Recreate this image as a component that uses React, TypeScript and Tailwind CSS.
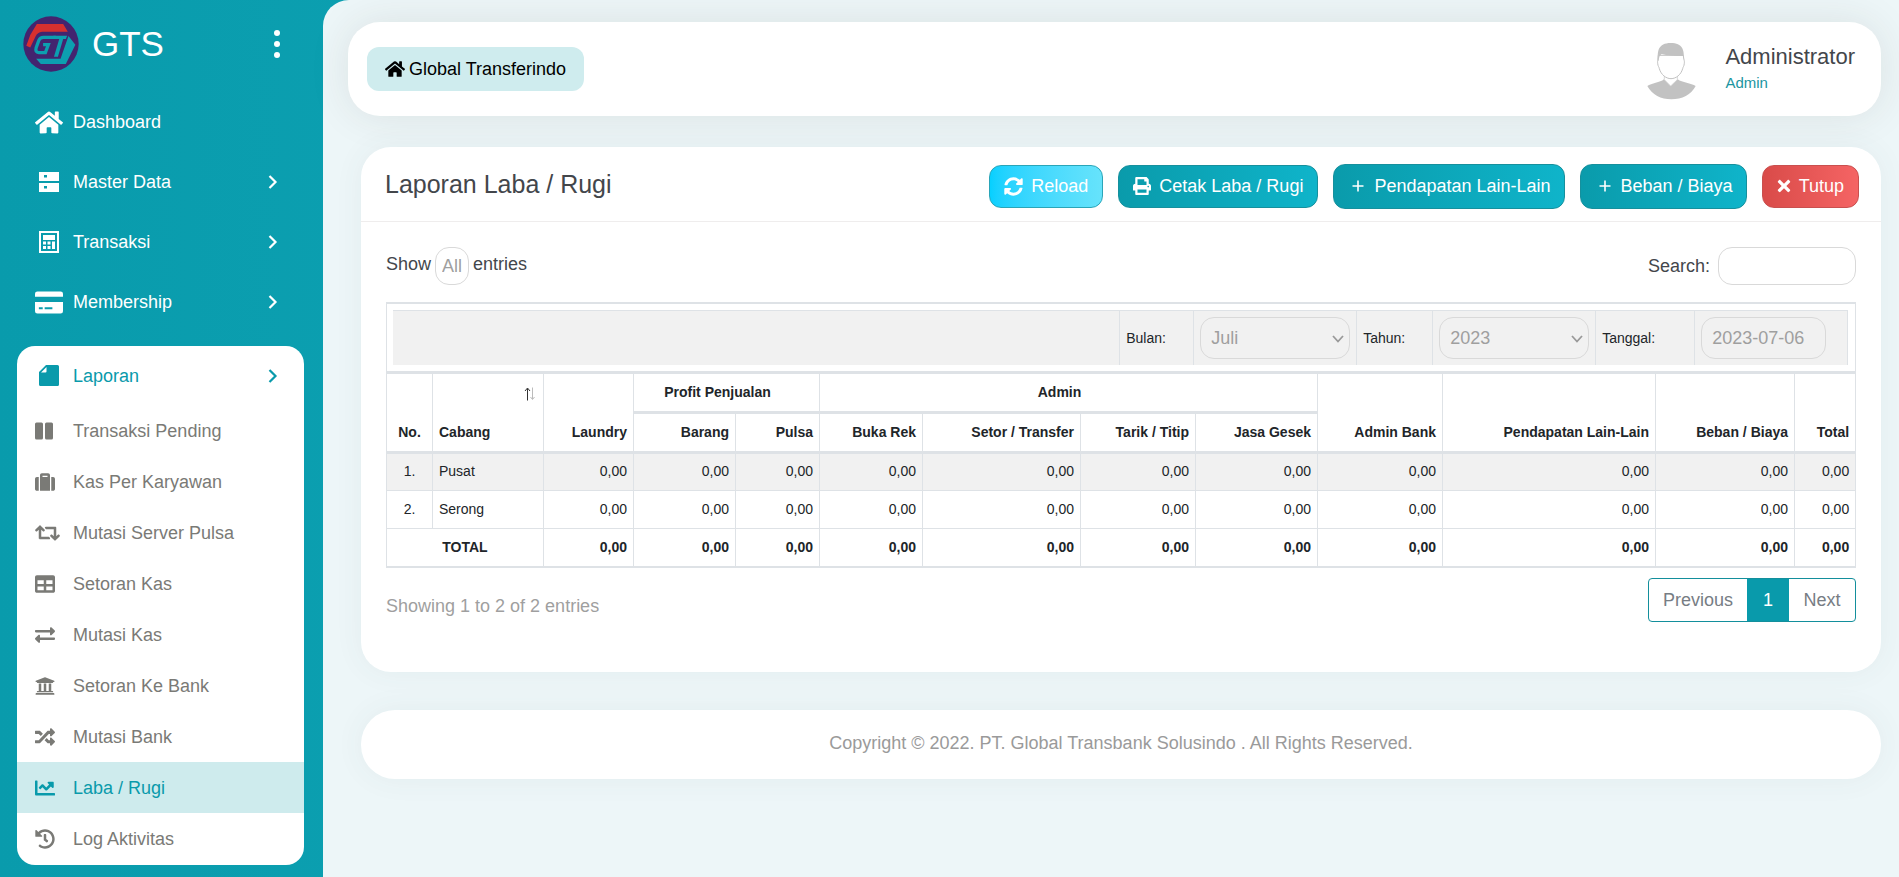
import React from "react";
import {
  FaHome,
  FaSuitcase,
  FaRetweet,
  FaTable,
  FaExchangeAlt,
  FaUniversity,
  FaRandom,
  FaChartLine,
  FaHistory,
  FaSyncAlt,
  FaPrint,
  FaTimes,
} from "react-icons/fa";

const FONT = "font-['Liberation_Sans',Arial,sans-serif]";

function Logo() {
  return (
    <svg viewBox="38 32 170 170" className="size-14 shrink-0" aria-hidden="true">
      <circle cx="123" cy="117" r="84" fill="#43246f" />
      <path d="M80 56H160L174 80H96Q82 82 76 94L60 128L48 122L60 90Z" fill="#d6302f" />
      <path
        d="M138 97H100Q90 97 86 106L78 128Q74 143 86 143H106L115 119H99"
        fill="none"
        stroke="#0c9fb0"
        strokeWidth="10"
      />
      <path d="M130 92H172L168 102H160L144 156H132L148 102H127Z" fill="#0c9fb0" />
      <path d="M176 93L197 119L168 178H92L78 162H152Z" fill="#0c9fb0" />
    </svg>
  );
}

function Avatar() {
  return (
    <svg viewBox="50 38 153 174" className="h-[58px] w-[51px] shrink-0" role="img" aria-label="Administrator">
      <path d="M54 170C66 162 92 160 104 150L124 171L145 150C158 160 186 162 199 170C186 196 158 210 126 210C95 210 68 196 54 170Z" fill="#c2c2c2" />
      <path d="M105 138V151L124 170L144 151V138" fill="#fff" stroke="#c2c2c2" strokeWidth="2" />
      <path d="M87 78C86 92 84 92 85 102C86 112 89 112 90 118C95 136 110 148 125 148C140 148 155 136 160 118C161 112 164 112 165 102C166 92 163 92 162 78Z" fill="#fff" stroke="#c2c2c2" strokeWidth="3" />
      <path d="M86 94C84 66 86 41 124 41C160 41 166 62 163 94L161 80Q120 80 97 74Q89 78 88 94Z" fill="#c2c2c2" />
    </svg>
  );
}

const ServerIcon = () => (
  <svg viewBox="0 0 20 20" className="size-5" fill="currentColor" aria-hidden="true">
    <path fillRule="evenodd" d="M0 0H20V9H0ZM5 3V5.500H8V3Z" />
    <path fillRule="evenodd" d="M0 11H20V20H0ZM5 14V16.500H8V14Z" />
  </svg>
);

const CalculatorIcon = () => (
  <svg viewBox="0 0 20 22" className="h-[22px] w-5" fill="currentColor" aria-hidden="true">
    <path fillRule="evenodd" d="M0 0H20V22H0ZM2 2V20H18V2Z" />
    <path d="M4 4H16V9H4ZM4 10.500H7V13.500H4ZM8.500 10.500H11.500V13.500H8.500ZM13 10.500H16V18H13ZM4 15H7V18H4ZM8.500 15H11.500V18H8.500Z" />
  </svg>
);

const CardIcon = () => (
  <svg viewBox="0 0 29 23" className="h-[23px] w-[29px]" fill="currentColor" aria-hidden="true">
    <path d="M2.500 0H26.500A2.500 2.500 0 0 1 29 2.500V5.500H0V2.500A2.500 2.500 0 0 1 2.500 0Z" />
    <path fillRule="evenodd" d="M0 11H29V20.500A2.500 2.500 0 0 1 26.500 23H2.500A2.500 2.500 0 0 1 0 20.500ZM4 16.500V18.500H8V16.500ZM10 16.500V18.500H18V16.500Z" />
  </svg>
);

const FileIcon = () => (
  <svg viewBox="0 0 20 21" className="h-[21px] w-5" fill="currentColor" aria-hidden="true">
    <path fillRule="evenodd" d="M7 0H18.500A1.500 1.500 0 0 1 20 1.500V19.500A1.500 1.500 0 0 1 18.500 21H1.500A1.500 1.500 0 0 1 0 19.500V7ZM7.500 2L2 7.500H6.500A1 1 0 0 0 7.500 6.500Z" />
  </svg>
);

const ColumnsIcon = () => (
  <svg viewBox="0 0 20 20" className="size-5" fill="currentColor" aria-hidden="true">
    <rect x="0" y="1.500" width="8" height="17" rx="1.500" />
    <rect x="10" y="1.500" width="8" height="17" rx="1.500" />
  </svg>
);

const Chevron = () => (
  <svg viewBox="0 0 10 14" className="h-[14px] w-[10px]" fill="none" stroke="currentColor" strokeWidth="2.200" aria-hidden="true">
    <path d="M1.500 1L7.500 7L1.500 13" />
  </svg>
);

const PlusIcon = () => (
  <svg viewBox="0 0 12 12" className="size-3" fill="none" stroke="currentColor" strokeWidth="1.600" aria-hidden="true">
    <path d="M6 0.500V11.500M0.500 6H11.500" />
  </svg>
);

const SelectArrow = () => (
  <svg viewBox="0 0 12 8" className="pointer-events-none absolute top-[18px] right-[6px] h-2 w-3" fill="none" stroke="#999" strokeWidth="1.800" aria-hidden="true">
    <path d="M1 1L6 6.500L11 1" />
  </svg>
);

const SortIcon = () => (
  <svg viewBox="0 0 12 14" className="absolute top-[13px] right-[7px] h-[14px] w-3" fill="none" aria-hidden="true">
    <path d="M3.500 13.500V1.500M1 4L3.500 1L6 4" stroke="#333" />
    <path d="M8.500 0.500V12M6.500 10L8.500 12.500L10.500 10" stroke="#bbb" />
  </svg>
);

const mainItems = [
  { label: "Dashboard", icon: <FaHome className="h-[25px] w-[28px]" />, arrow: false },
  { label: "Master Data", icon: <ServerIcon />, arrow: true },
  { label: "Transaksi", icon: <CalculatorIcon />, arrow: true },
  { label: "Membership", icon: <CardIcon />, arrow: true },
];

const subItems = [
  { label: "Transaksi Pending", icon: <ColumnsIcon /> },
  { label: "Kas Per Karyawan", icon: <FaSuitcase className="size-5" /> },
  { label: "Mutasi Server Pulsa", icon: <FaRetweet className="h-5 w-[25px]" /> },
  { label: "Setoran Kas", icon: <FaTable className="size-5" /> },
  { label: "Mutasi Kas", icon: <FaExchangeAlt className="size-5" /> },
  { label: "Setoran Ke Bank", icon: <FaUniversity className="size-5" /> },
  { label: "Mutasi Bank", icon: <FaRandom className="size-5" /> },
  { label: "Laba / Rugi", icon: <FaChartLine className="size-5" />, active: true },
  { label: "Log Aktivitas", icon: <FaHistory className="size-5" /> },
];

function Sidebar() {
  return (
    <aside className="w-[323px] shrink-0 pb-3 text-lg text-white">
      <div className="flex h-[92px] items-center pr-10 pb-1 pl-[23px]">
        <Logo />
        <span className="ml-[13px] flex-1 text-[35px] leading-10">GTS</span>
        <button type="button" aria-label="Menu" className="flex w-3 flex-col items-center gap-[5px]">
          <span className="size-[6px] rounded-full bg-white" />
          <span className="size-[6px] rounded-full bg-white" />
          <span className="size-[6px] rounded-full bg-white" />
        </button>
      </div>
      <nav>
        {mainItems.map((item) => (
          <a key={item.label} href="#" className="flex h-[60px] items-center pr-[45px] pl-[35px]">
            <span className="flex w-7 shrink-0 justify-center">{item.icon}</span>
            <span className="ml-[10px] flex-1">{item.label}</span>
            {item.arrow && <Chevron />}
          </a>
        ))}
        <div className="mt-[14px] mr-[19px] ml-[17px] overflow-hidden rounded-[18px] bg-white pb-px">
          <a href="#" className="flex h-[59px] items-center pr-[26px] pl-[18px] text-[#099aab]">
            <span className="flex w-7 shrink-0 justify-center">
              <FileIcon />
            </span>
            <span className="ml-[10px] flex-1">Laporan</span>
            <Chevron />
          </a>
          {subItems.map((item) => (
            <a
              key={item.label}
              href="#"
              className={
                item.active
                  ? "flex h-[51px] items-center bg-[#ceebed] pl-[18px] text-[#099aab]"
                  : "flex h-[51px] items-center pl-[18px] text-[#7a7a76]"
              }
            >
              <span className="w-7 shrink-0">{item.icon}</span>
              <span className="ml-[10px]">{item.label}</span>
            </a>
          ))}
        </div>
      </nav>
    </aside>
  );
}

const colWidths = [
  "w-[46px]", "w-[111px]", "w-[90px]", "w-[102px]", "w-[84px]", "w-[103px]", "w-[158px]",
  "w-[115px]", "w-[122px]", "w-[125px]", "w-[213px]", "w-[139px]", "w-[61px]",
];

const rows = [
  { no: "1.", name: "Pusat", values: Array(11).fill("0,00") },
  { no: "2.", name: "Serong", values: Array(11).fill("0,00") },
];
const totals = Array(11).fill("0,00");

const cell = "border border-[#dee2e6] px-[6px]";
const head = "border border-b-[3px] border-[#dee2e6] px-[6px] pb-[9px] align-bottom font-bold whitespace-nowrap";

function Filters() {
  const label = "flex items-center border-l border-[#dee2e6] pl-[6px]";
  const control = "h-[42px] appearance-none rounded-[14px] border border-[#d9d9d9] bg-transparent pl-[10px] text-lg text-[#9f9f9f]";
  return (
    <div className="flex h-[55px] border-t border-r border-[#dee2e6] bg-[#f1f1f1] font-normal">
      <div className="flex-1" />
      <label htmlFor="bulan" className={label + " w-[74px]"}>Bulan:</label>
      <div className="w-[163px] border-l border-[#dee2e6] p-[6px]">
        <div className="relative w-[150px]">
          <select id="bulan" className={control + " w-full"} defaultValue="Juli">
            <option>Juni</option>
            <option>Juli</option>
          </select>
          <SelectArrow />
        </div>
      </div>
      <label htmlFor="tahun" className={label + " w-[76px]"}>Tahun:</label>
      <div className="w-[163px] border-l border-[#dee2e6] p-[6px]">
        <div className="relative w-[150px]">
          <select id="tahun" className={control + " w-full"} defaultValue="2023">
            <option>2022</option>
            <option>2023</option>
          </select>
          <SelectArrow />
        </div>
      </div>
      <label htmlFor="tanggal" className={label + " w-[99px]"}>Tanggal:</label>
      <div className="w-[153px] border-l border-[#dee2e6] p-[6px]">
        <input id="tanggal" type="text" defaultValue="2023-07-06" className={control + " w-[125px]"} />
      </div>
    </div>
  );
}

function ReportTable() {
  return (
    <table className="w-full table-fixed border-collapse border-y-2 border-[#dee2e6] text-sm text-[#212529]">
      <colgroup>
        {colWidths.map((w, i) => (
          <col key={i} className={w} />
        ))}
      </colgroup>
      <thead>
        <tr>
          <td colSpan={13} className="border border-t-2 border-b-[3px] border-[#dee2e6] py-[6px] pr-[7px] pl-[6px]">
            <Filters />
          </td>
        </tr>
        <tr className="h-10">
          <th rowSpan={2} className={head + " text-center"}>No.</th>
          <th rowSpan={2} className={head + " relative text-left"}>
            Cabang
            <SortIcon />
          </th>
          <th rowSpan={2} className={head + " text-right"}>Laundry</th>
          <th colSpan={2} className={head + " pr-6 text-center"}>Profit Penjualan</th>
          <th colSpan={4} className={head + " pr-6 text-center"}>Admin</th>
          <th rowSpan={2} className={head + " text-right"}>Admin Bank</th>
          <th rowSpan={2} className={head + " text-right"}>Pendapatan Lain-Lain</th>
          <th rowSpan={2} className={head + " text-right"}>Beban / Biaya</th>
          <th rowSpan={2} className={head + " text-right"}>Total</th>
        </tr>
        <tr className="h-10">
          <th className={head + " text-right"}>Barang</th>
          <th className={head + " text-right"}>Pulsa</th>
          <th className={head + " text-right"}>Buka Rek</th>
          <th className={head + " text-right"}>Setor / Transfer</th>
          <th className={head + " text-right"}>Tarik / Titip</th>
          <th className={head + " text-right"}>Jasa Gesek</th>
        </tr>
      </thead>
      <tbody>
        {rows.map((row) => (
          <tr key={row.no} className="h-[38px] odd:bg-[#f1f1f1]">
            <td className={cell + " pb-[2px] text-center"}>{row.no}</td>
            <td className={cell + " pb-[2px]"}>{row.name}</td>
            {row.values.map((v, i) => (
              <td key={i} className={cell + " pb-[2px] text-right"}>{v}</td>
            ))}
          </tr>
        ))}
      </tbody>
      <tfoot>
        <tr className="h-[38px]">
          <th colSpan={2} className={cell + " border-b-2 text-center"}>TOTAL</th>
          {totals.map((v, i) => (
            <th key={i} className={cell + " border-b-2 text-right"}>{v}</th>
          ))}
        </tr>
      </tfoot>
    </table>
  );
}

const btn = "flex items-center justify-center rounded-xl border text-lg leading-7 text-white whitespace-nowrap";
const teal = btn + " border-[#16909d] bg-linear-to-r from-[#0a9bab] to-[#0fb4ca]";

export default function App() {
  return (
    <div className={"flex min-h-screen bg-linear-to-r from-[#099bac] from-0% to-[#0ca0b1] to-25% " + FONT}>
      <Sidebar />
      <div className="min-w-0 flex-1 rounded-tl-[26px] bg-[#edf6f8] pt-[22px] pr-[18px] pb-6 pl-[25px]">
        <header className="flex h-[94px] items-center justify-between rounded-[32px] bg-white pr-[26px] pl-[19px] shadow-[0_0_40px_rgba(60,50,40,0.10)]">
          <a href="#" className="flex h-11 items-center gap-1 rounded-xl bg-[#cfecee] px-[18px] text-lg text-black">
            <FaHome className="h-[18px] w-5" />
            Global Transferindo
          </a>
          <div className="flex items-center pt-1">
            <Avatar />
            <div className="ml-7 pb-1">
              <div className="text-[22px] leading-7 text-[#43464b]">Administrator</div>
              <div className="text-[15px] leading-6 text-[#1b959f]">Admin</div>
            </div>
          </div>
        </header>

        <main className="mt-[31px] ml-[13px] rounded-[30px] bg-white pb-[50px] shadow-[0_0_30px_rgba(60,80,90,0.06)]">
          <div className="flex h-[75px] items-center justify-between border-b border-[#efeded] pr-[22px] pl-6">
            <h1 className="text-[25px] leading-8 text-[#43464b]">Laporan Laba / Rugi</h1>
            <div className="flex items-center gap-[15px] pt-1">
              <button type="button" className={btn + " h-[43px] gap-2 border-[#2aa5b8] bg-linear-to-r from-[#05d0ff] to-[#66e3fb] px-[14px]"}>
                <FaSyncAlt className="size-[19px]" />
                Reload
              </button>
              <button type="button" className={teal + " h-[43px] gap-2 px-[14px]"}>
                <FaPrint className="size-[18px]" />
                Cetak Laba / Rugi
              </button>
              <button type="button" className={teal + " h-[45px] gap-[10px] pr-[13px] pl-[18px]"}>
                <PlusIcon />
                Pendapatan Lain-Lain
              </button>
              <button type="button" className={teal + " h-[45px] gap-[10px] pr-[13px] pl-[18px]"}>
                <PlusIcon />
                Beban / Biaya
              </button>
              <button type="button" className={btn + " h-[43px] gap-2 border-[#c9504f] bg-linear-to-r from-[#d94b49] to-[#f56464] px-[14px]"}>
                <FaTimes className="h-[18px] w-[14px]" />
                Tutup
              </button>
            </div>
          </div>

          <div className="px-[25px] pt-[25px]">
            <div className="flex items-center justify-between text-lg text-[#43464b]">
              <label className="flex items-center gap-1">
                <span className="pb-1">Show</span>
                <select className="h-[38px] w-[34px] appearance-none rounded-[14px] border border-[#d9d9d9] bg-white px-[6px] text-[#9f9f9f]">
                  <option>All</option>
                </select>
                <span className="pb-1">entries</span>
              </label>
              <label className="flex items-center gap-2">
                Search:
                <input type="search" className="h-[38px] w-[138px] rounded-[14px] border border-[#d9d9d9] bg-white px-3" />
              </label>
            </div>

            <div className="mt-[17px]">
              <ReportTable />
            </div>

            <div className="mt-[10px] flex items-start justify-between text-lg">
              <p className="pt-[14px] text-[#9f9f9f]">Showing 1 to 2 of 2 entries</p>
              <nav aria-label="Halaman" className="flex h-11 overflow-hidden rounded border border-[#138f9c] text-[#777d84]">
                <button type="button" className="w-[98px]">Previous</button>
                <button type="button" className="w-[42px] bg-[#099aab] text-white">1</button>
                <button type="button" className="w-[66px]">Next</button>
              </nav>
            </div>
          </div>
        </main>

        <footer className="mt-[38px] ml-[13px] flex h-[69px] items-center justify-center rounded-[34px] bg-white pb-[2px] text-lg text-[#9a9a9a] shadow-[0_0_30px_rgba(60,80,90,0.06)]">
          Copyright © 2022. PT. Global Transbank Solusindo . All Rights Reserved.
        </footer>
      </div>
    </div>
  );
}
